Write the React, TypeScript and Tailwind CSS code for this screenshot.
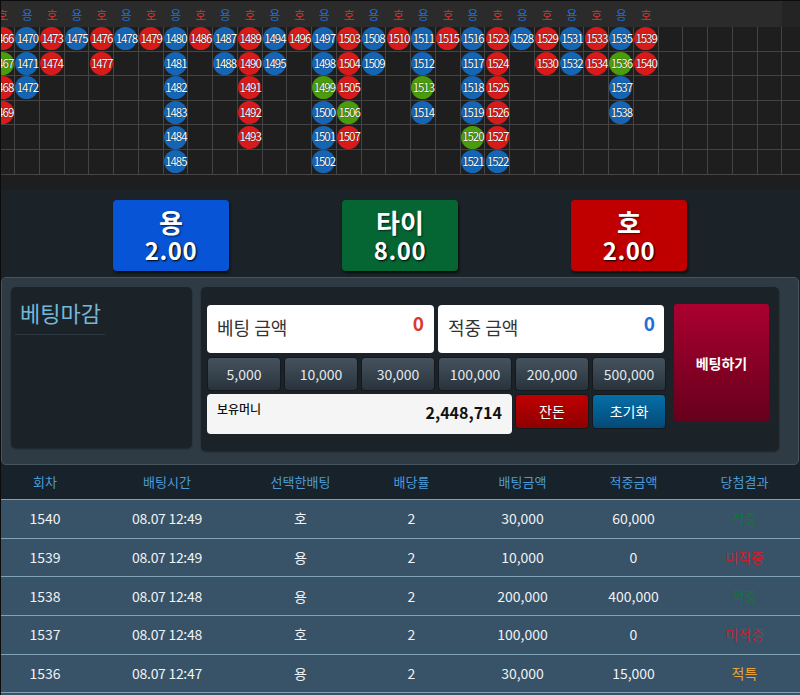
import React from 'react';

type Side = 'B' | 'R' | 'G';

const FONT = "font-['Noto_Sans_CJK_KR','Noto_Sans',sans-serif]";

// each road column: header label + cells top to bottom
const road: { label: string; items: [number, Side][] }[] = [
  { label: '호', items: [[1466, 'R'], [1467, 'G'], [1468, 'R'], [1469, 'R']] },
  { label: '용', items: [[1470, 'B'], [1471, 'B'], [1472, 'B']] },
  { label: '호', items: [[1473, 'R'], [1474, 'R']] },
  { label: '용', items: [[1475, 'B']] },
  { label: '호', items: [[1476, 'R'], [1477, 'R']] },
  { label: '용', items: [[1478, 'B']] },
  { label: '호', items: [[1479, 'R']] },
  { label: '용', items: [[1480, 'B'], [1481, 'B'], [1482, 'B'], [1483, 'B'], [1484, 'B'], [1485, 'B']] },
  { label: '호', items: [[1486, 'R']] },
  { label: '용', items: [[1487, 'B'], [1488, 'B']] },
  { label: '호', items: [[1489, 'R'], [1490, 'R'], [1491, 'R'], [1492, 'R'], [1493, 'R']] },
  { label: '용', items: [[1494, 'B'], [1495, 'B']] },
  { label: '호', items: [[1496, 'R']] },
  { label: '용', items: [[1497, 'B'], [1498, 'B'], [1499, 'G'], [1500, 'B'], [1501, 'B'], [1502, 'B']] },
  { label: '호', items: [[1503, 'R'], [1504, 'R'], [1505, 'R'], [1506, 'G'], [1507, 'R']] },
  { label: '용', items: [[1508, 'B'], [1509, 'B']] },
  { label: '호', items: [[1510, 'R']] },
  { label: '용', items: [[1511, 'B'], [1512, 'B'], [1513, 'G'], [1514, 'B']] },
  { label: '호', items: [[1515, 'R']] },
  { label: '용', items: [[1516, 'B'], [1517, 'B'], [1518, 'B'], [1519, 'B'], [1520, 'G'], [1521, 'B']] },
  { label: '호', items: [[1523, 'R'], [1524, 'R'], [1525, 'R'], [1526, 'R'], [1527, 'R'], [1522, 'B']] },
  { label: '용', items: [[1528, 'B']] },
  { label: '호', items: [[1529, 'R'], [1530, 'R']] },
  { label: '용', items: [[1531, 'B'], [1532, 'B']] },
  { label: '호', items: [[1533, 'R'], [1534, 'R']] },
  { label: '용', items: [[1535, 'B'], [1536, 'G'], [1537, 'B'], [1538, 'B']] },
  { label: '호', items: [[1539, 'R'], [1540, 'R']] },
];

const circleColor: Record<Side, string> = {
  B: 'bg-[#1565b4]',
  R: 'bg-[#d71a1a]',
  G: 'bg-[#4a9c0c]',
};

const columns = Array.from({ length: 33 }, (_, i) => road[i] ?? { label: '', items: [] as [number, Side][] });

const history = [
  ['1540', '08.07 12:49', '호', '2', '30,000', '60,000', '적중', 'text-[#0f7a2c]'],
  ['1539', '08.07 12:49', '용', '2', '10,000', '0', '미적중', 'text-[#c8202f]'],
  ['1538', '08.07 12:48', '용', '2', '200,000', '400,000', '적중', 'text-[#0f7a2c]'],
  ['1537', '08.07 12:48', '호', '2', '100,000', '0', '미적중', 'text-[#c8202f]'],
  ['1536', '08.07 12:47', '용', '2', '30,000', '15,000', '적특', 'text-[#e8a33a]'],
];

const chips = ['5,000', '10,000', '30,000', '100,000', '200,000', '500,000'];
const heads = ['회차', '배팅시간', '선택한배팅', '배당률', '배팅금액', '적중금액', '당첨결과'];
const tableCols = 'grid grid-cols-[88px_156px_111px_111px_111px_111px_111px]';

function OddsButton({ name, odds, color }: { name: string; odds: string; color: string }) {
  return (
    <div className={`w-[116px] h-[71px] rounded-[4px] ${color} flex flex-col items-center text-white font-bold shadow-[1px_2px_3px_rgba(0,0,0,0.7)]`}>
      <span className="text-[26px] leading-[32px] mt-[6px] [text-shadow:1px_1px_2px_rgba(0,0,0,0.6)]">{name}</span>
      <span className="text-[24px] leading-[26px] -mt-[1px] tracking-[0.5px] [text-shadow:1px_1px_2px_#000]">{odds}</span>
    </div>
  );
}

export default function App() {
  return (
    <div className={`${FONT} w-full h-screen overflow-hidden flex flex-col bg-[#1b2328] border-l border-t border-[#0c0c0c]`}>
      {/* road board */}
      <div className="h-[189px] bg-[#1e1e1e] overflow-hidden shrink-0">
        <div className="-ml-[10.75px] w-[830px]">
          <div className="flex h-[26px] bg-[#242424]">
            <div className="flex bg-[#2b2b2b]">
              {columns.slice(0, 32).map((col, i) => (
                <div
                  key={i}
                  className={`w-[24.75px] pt-[1px] flex items-center justify-center text-[12px] leading-none ${col.label === '용' ? 'text-[#1f6fd6]' : 'text-[#d8352f]'}`}
                >
                  {col.label}
                </div>
              ))}
            </div>
          </div>
          <div className="flex">
            {columns.map((col, i) => (
              <div key={i} className="w-[24.75px] shrink-0 flex flex-col">
                {[0, 1, 2, 3, 4, 5].map((r) => {
                  const item = col.items[r];
                  return (
                    <div key={r} className="h-[24.6px] border-r border-b border-[#444444] flex items-center justify-center">
                      {item && (
                        <div className={`w-[23px] h-[23px] shrink-0 pl-[1px] rounded-full ${circleColor[item[1]]} flex items-center justify-center text-white text-[11.5px] leading-none tracking-[-1.1px] [text-shadow:0_0_1px_#000]`}>
                          {item[0]}
                        </div>
                      )}
                    </div>
                  );
                })}
              </div>
            ))}
          </div>
        </div>
      </div>

      {/* odds buttons */}
      <div className="h-[87px] shrink-0 pt-[10px] pr-[1px] flex justify-center gap-[113px]">
        <OddsButton name="용" odds="2.00" color="bg-[#0754d6]" />
        <OddsButton name="타이" odds="8.00" color="bg-[#056634]" />
        <OddsButton name="호" odds="2.00" color="bg-[#c00000]" />
      </div>

      {/* bet panel */}
      <div className="h-[188px] shrink-0 mr-[1px] rounded-[5px] border border-[#46545e] bg-[#2e3b45] flex pl-[9px] pt-[9px] gap-[9px]">
        <div className="w-[181px] h-[161px] rounded-[5px] bg-[#1b2328] shadow-[0_1px_2px_rgba(0,0,0,0.4)] pl-[4px] pt-[9px]">
          <div className="w-[90px] h-[39px] border-b border-[#2c3740] text-[22px] leading-[32px] pl-[5px] whitespace-nowrap text-[#74b7d8]">
            베팅마감
          </div>
        </div>

        <div className="w-[578px] h-[164px] rounded-[5px] bg-[#1b2328] shadow-[0_1px_2px_rgba(0,0,0,0.4)] flex pl-[6px] pt-[18px]">
          <div className="w-[460px] flex flex-col">
            <div className="flex gap-[4px]">
              <div className="w-[227px] h-[48px] rounded-[4px] bg-white flex justify-between pl-[10px] pr-[10px]">
                <span className="text-[18px] leading-[44px] text-[#333]">베팅 금액</span>
                <span className="text-[19px] leading-[36px] font-bold text-[#d83a32]">0</span>
              </div>
              <div className="w-[226px] h-[48px] rounded-[4px] bg-white flex justify-between pl-[10px] pr-[9px]">
                <span className="text-[18px] leading-[44px] text-[#333]">적중 금액</span>
                <span className="text-[19px] leading-[36px] font-bold text-[#1f6fd6]">0</span>
              </div>
            </div>
            <div className="mt-[4px] flex gap-[3px]">
              {chips.map((c) => (
                <div
                  key={c}
                  className="w-[74px] h-[34px] rounded-[4px] border border-[#15191d] bg-gradient-to-b from-[#46535f] to-[#28333c] flex items-center justify-center text-[14px] text-[#e4e8ec]"
                >
                  {c}
                </div>
              ))}
            </div>
            <div className="mt-[3px] flex">
              <div className="w-[305px] h-[40px] rounded-[4px] bg-[#f5f5f5] flex justify-between pl-[10px] pr-[10px]">
                <span className="text-[12px] leading-[30px] font-medium text-[#111]">보유머니</span>
                <span className="text-[16px] leading-[36px] font-bold text-[#111]">2,448,714</span>
              </div>
              <div className="ml-[3px] w-[74px] h-[35px] rounded-[4px] border border-[#15191d] bg-gradient-to-b from-[#c00000] to-[#8e0000] flex items-center justify-center text-[14px] text-white">
                잔돈
              </div>
              <div className="ml-[3px] w-[74px] h-[35px] rounded-[4px] border border-[#15191d] bg-gradient-to-b from-[#056fa8] to-[#044a78] flex items-center justify-center text-[14px] text-white">
                초기화
              </div>
            </div>
          </div>
          <div className="ml-[7px] w-[95px] h-[118px] rounded-[3px] bg-gradient-to-b from-[#ab0030] to-[#66001c] flex items-center justify-center -mt-[1px] text-[14px] font-bold text-white shrink-0">
            베팅하기
          </div>
        </div>
      </div>

      {/* history table */}
      <div className={`${tableCols} h-[35px] shrink-0 items-center text-center text-[13px] text-[#4c9bd8] bg-[#18222a] border-b border-[#7fa3b5]`}>
        {heads.map((h) => (
          <div key={h}>{h}</div>
        ))}
      </div>
      {history.map((row) => (
        <div
          key={row[0]}
          className={`${tableCols} h-[38.7px] shrink-0 items-center text-center text-[14px] text-[#eef3f6] bg-[#385267] border-b border-[#7fa3b5]`}
        >
          {row.slice(0, 6).map((v, i) => (
            <div key={i} className={i === 1 ? 'tracking-[-0.3px]' : ''}>{v}</div>
          ))}
          <div className={row[7]}>{row[6]}</div>
        </div>
      ))}
      <div className="flex-1 bg-[#385267]" />
    </div>
  );
}
